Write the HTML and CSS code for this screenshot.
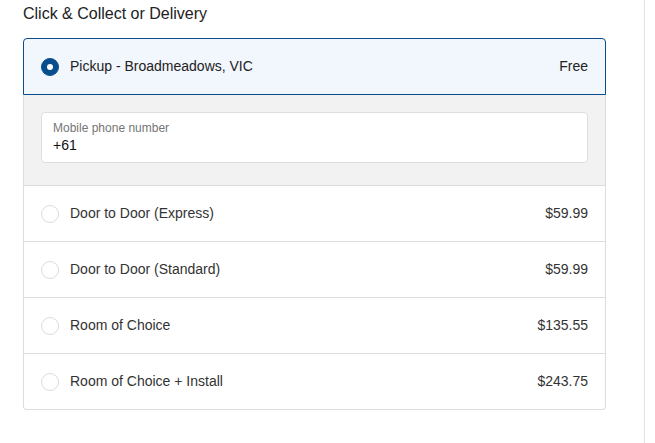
FILE: index.html
```html
<!DOCTYPE html>
<html lang="en">
<head>
<meta charset="utf-8">
<title>Click &amp; Collect or Delivery</title>
<link rel="stylesheet" href="styles.css">
</head>
<body>
<div class="page">
  <h2 class="title">Click &amp; Collect or Delivery</h2>
  <div class="card">
    <label class="option option--selected">
      <span class="radio radio--on"></span>
      <span class="option__name">Pickup - Broadmeadows, VIC</span>
      <span class="option__price">Free</span>
    </label>
    <div class="pickup-details">
      <div class="field">
        <span class="field__label">Mobile phone number</span>
        <span class="field__value">+61</span>
      </div>
    </div>
    <label class="option">
      <span class="radio"></span>
      <span class="option__name">Door to Door (Express)</span>
      <span class="option__price">$59.99</span>
    </label>
    <label class="option">
      <span class="radio"></span>
      <span class="option__name">Door to Door (Standard)</span>
      <span class="option__price">$59.99</span>
    </label>
    <label class="option">
      <span class="radio"></span>
      <span class="option__name">Room of Choice</span>
      <span class="option__price">$135.55</span>
    </label>
    <label class="option option--last">
      <span class="radio"></span>
      <span class="option__name">Room of Choice + Install</span>
      <span class="option__price">$243.75</span>
    </label>
  </div>
</div>
</body>
</html>
```

FILE: styles.css
```css
html, body {
  margin: 0;
  padding: 0;
  background: #fff;
}

body {
  font-family: "Liberation Sans", Arial, sans-serif;
  color: #222;
}

.page {
  box-sizing: border-box;
  width: 645px;
  min-height: 443px;
  border-right: 1px solid #e2e2e2;
  padding: 4px 0 0 23px;
}

.title {
  margin: 0 0 14px;
  font-size: 16px;
  font-weight: normal;
  line-height: 20px;
  color: #222;
}

.card {
  width: 583px;
  display: flex;
  flex-direction: column;
}

.option {
  box-sizing: border-box;
  height: 56px;
  display: flex;
  align-items: center;
  padding: 0 17px 1px;
  border: 1px solid #dddddd;
  border-top: none;
  font-size: 14px;
  color: #333;
  background: #fff;
}

.option .radio {
  margin-top: 1px;
}

.option--selected {
  height: 57px;
  border: 1px solid #0a4d8c;
  border-radius: 4px 4px 0 0;
  background: #f2f6fd;
  color: #222;
}

.option--last {
  border-radius: 0 0 4px 4px;
}

.radio {
  box-sizing: border-box;
  width: 18px;
  height: 18px;
  border-radius: 50%;
  border: 1px solid #dcdcdc;
  background: #fff;
  margin-right: 11px;
  flex: none;
  display: flex;
  align-items: center;
  justify-content: center;
}

.radio--on {
  background: #0a4d8c;
  border-color: #0a4d8c;
}

.radio--on::after {
  content: "";
  width: 6px;
  height: 6px;
  border-radius: 50%;
  background: #fff;
}

.option__name {
  flex: 1;
}

.option__price {
  text-align: right;
}

.pickup-details {
  box-sizing: border-box;
  height: 91px;
  padding: 17px 17px 0;
  background: #f2f2f2;
  border: 1px solid #dddddd;
  border-top: none;
}

.field {
  box-sizing: border-box;
  height: 51px;
  background: #fff;
  border: 1px solid #dedede;
  border-radius: 4px;
  padding: 8px 11px 0;
  display: flex;
  flex-direction: column;
}

.field__label {
  font-size: 12px;
  line-height: 15px;
  color: #757575;
}

.field__value {
  font-size: 14px;
  line-height: 18px;
  color: #111;
}
```
